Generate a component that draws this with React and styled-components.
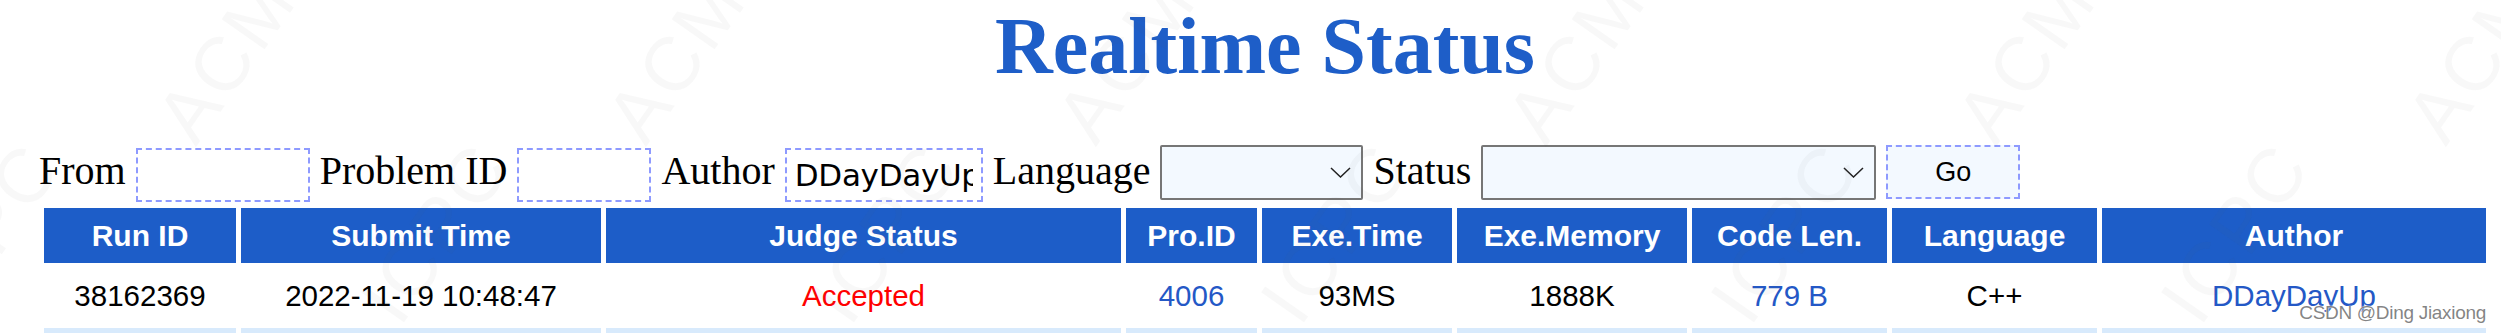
import React from "react";
import styled, { createGlobalStyle } from "styled-components";

const GlobalStyle = createGlobalStyle`
  html, body {
    margin: 0;
    padding: 0;
    background: #ffffff;
    overflow: hidden;
  }
`;

const Page = styled.div`
  position: relative;
  width: 2501px;
  height: 333px;
  overflow: hidden;
  box-sizing: border-box;
  padding-left: 39px;
  background: #ffffff;
`;

const Main = styled.div`
  width: 2452px;
`;

const Title = styled.h1`
  margin: 0;
  font-family: "Liberation Serif", "Times New Roman", serif;
  font-weight: 700;
  font-size: 80px;
  line-height: 92px;
  color: #1e5ec8;
  text-align: center;
`;

const FilterBar = styled.form`
  display: flex;
  align-items: flex-start;
  gap: 10px;
  margin: 53px 0 0;
  height: 57px;
`;

const Label = styled.label`
  font-family: "Liberation Serif", "Times New Roman", serif;
  font-size: 40px;
  line-height: 46px;
  margin-top: 3px;
  color: #000;
  white-space: nowrap;
`;

const TextInput = styled.input`
  box-sizing: border-box;
  width: ${(p) => p.$w}px;
  height: 54px;
  margin: 3px 0 0;
  padding: 0 8px;
  border: 2px dashed #8e9aff;
  border-radius: 0;
  background: #ffffff;
  font-family: "DejaVu Sans", Verdana, sans-serif;
  font-size: 31px;
  letter-spacing: -0.3px;
  color: #000;
  outline: none;
`;

const SelectBox = styled.div`
  position: relative;
  width: ${(p) => p.$w}px;
  height: 55px;
  flex: none;
`;

const Select = styled.select`
  appearance: none;
  box-sizing: border-box;
  width: 100%;
  height: 100%;
  margin: 0;
  padding: 0 40px 0 8px;
  border: 2px solid #767676;
  border-radius: 2px;
  background: #f3f9ff;
  font-family: "Liberation Sans", Arial, sans-serif;
  font-size: 28px;
  color: #000;
  outline: none;
`;

const Chevron = styled.svg`
  position: absolute;
  right: 12px;
  top: 22px;
  width: 21px;
  height: 11px;
  pointer-events: none;
`;

const GoButton = styled.button`
  box-sizing: border-box;
  width: 134px;
  height: 54px;
  margin: 0;
  padding: 0;
  border: 2px dashed #8e9aff;
  border-radius: 0;
  background: #f3f9ff;
  font-family: "Liberation Sans", Arial, sans-serif;
  font-size: 27px;
  color: #000;
`;

const Table = styled.table`
  margin-top: 1px;
  width: 2452px;
  table-layout: fixed;
  border-collapse: separate;
  border-spacing: 5px;
`;

const Col = styled.col`
  width: ${(p) => p.$w}px;
`;

const HeadCell = styled.th`
  height: 55px;
  padding: 0;
  background: #1d5dc8;
  color: #ffffff;
  font-family: "Liberation Sans", Arial, sans-serif;
  font-weight: 700;
  font-size: 30px;
  text-align: center;
  white-space: nowrap;
`;

const toneColor = {
  plain: "#000000",
  link: "#2458c6",
  accepted: "#ff0000",
};

const Cell = styled.td`
  height: 55px;
  padding: 0;
  background: ${(p) => (p.$striped ? "#d8eafc" : "transparent")};
  color: ${(p) => toneColor[p.$tone || "plain"]};
  font-family: "Liberation Sans", Arial, sans-serif;
  font-size: 29.5px;
  text-align: center;
  white-space: nowrap;
`;

const Watermark = styled.div`
  position: absolute;
  inset: 0;
  pointer-events: none;
  z-index: 2;
  overflow: hidden;
`;

const Mark = styled.span`
  position: absolute;
  font-family: "Liberation Sans", Arial, sans-serif;
  font-size: 76px;
  letter-spacing: 4px;
  color: rgba(90, 90, 90, 0.045);
  white-space: nowrap;
  transform: translate(-50%, -50%) rotate(-55deg);
`;

const Credit = styled.div`
  position: absolute;
  right: 15px;
  top: 302px;
  z-index: 3;
  font-family: "Liberation Sans", Arial, sans-serif;
  font-size: 19px;
  line-height: 22px;
  letter-spacing: -0.3px;
  color: rgba(110, 110, 110, 0.85);
  text-shadow: 0 0 1px #fff, 0 0 2px #fff;
  pointer-events: none;
`;

const columns = [
  { title: "Run ID", w: 192 },
  { title: "Submit Time", w: 360 },
  { title: "Judge Status", w: 515 },
  { title: "Pro.ID", w: 131 },
  { title: "Exe.Time", w: 190 },
  { title: "Exe.Memory", w: 230 },
  { title: "Code Len.", w: 195 },
  { title: "Language", w: 205 },
  { title: "Author", w: 384 },
];

const row = [
  { v: "38162369" },
  { v: "2022-11-19 10:48:47" },
  { v: "Accepted", tone: "accepted" },
  { v: "4006", tone: "link" },
  { v: "93MS" },
  { v: "1888K" },
  { v: "779 B", tone: "link" },
  { v: "C++" },
  { v: "DDayDayUp", tone: "link" },
];

const marks = [];
for (let i = 0; i < 6; i++) {
  marks.push({ text: "ACM", x: 226 + 450 * i, y: 58 });
  marks.push({ text: "ICPC", x: -15 + 450 * i, y: 232 });
}

function ChevronIcon() {
  return (
    <Chevron viewBox="0 0 21 11" aria-hidden="true">
      <path d="M1 1 L10.5 10 L20 1" fill="none" stroke="#222" strokeWidth="1.5" />
    </Chevron>
  );
}

export default function App() {
  return (
    <>
      <GlobalStyle />
      <Page>
        <Main>
          <Title>Realtime Status</Title>
          <FilterBar onSubmit={(e) => e.preventDefault()}>
            <Label>From</Label>
            <TextInput $w={174} defaultValue="" />
            <Label>Problem ID</Label>
            <TextInput $w={134} defaultValue="" />
            <Label>Author</Label>
            <TextInput $w={198} defaultValue="DDayDayUp" />
            <Label>Language</Label>
            <SelectBox $w={203}>
              <Select defaultValue="">
                <option value=""></option>
              </Select>
              <ChevronIcon />
            </SelectBox>
            <Label>Status</Label>
            <SelectBox $w={395}>
              <Select defaultValue="">
                <option value=""></option>
              </Select>
              <ChevronIcon />
            </SelectBox>
            <GoButton type="submit">Go</GoButton>
          </FilterBar>
          <Table>
            <colgroup>
              {columns.map((c) => (
                <Col key={c.title} $w={c.w} />
              ))}
            </colgroup>
            <thead>
              <tr>
                {columns.map((c) => (
                  <HeadCell key={c.title}>{c.title}</HeadCell>
                ))}
              </tr>
            </thead>
            <tbody>
              <tr>
                {row.map((c, i) => (
                  <Cell key={i} $tone={c.tone}>
                    {c.v}
                  </Cell>
                ))}
              </tr>
              <tr>
                {columns.map((c) => (
                  <Cell key={c.title} $striped />
                ))}
              </tr>
            </tbody>
          </Table>
        </Main>
        <Watermark>
          {marks.map((m, i) => (
            <Mark key={i} style={{ left: m.x, top: m.y }}>
              {m.text}
            </Mark>
          ))}
        </Watermark>
        <Credit>CSDN @Ding Jiaxiong</Credit>
      </Page>
    </>
  );
}
